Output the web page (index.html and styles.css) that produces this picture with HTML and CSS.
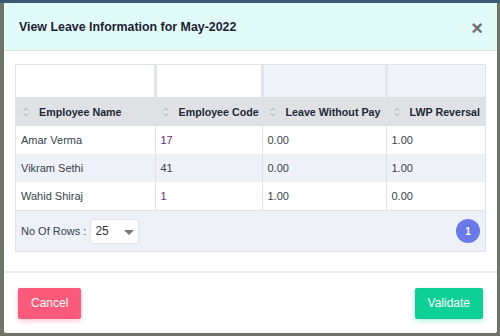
FILE: index.html
```html
<!DOCTYPE html>
<html>
<head>
<meta charset="utf-8">
<link rel="stylesheet" href="styles.css">
</head>
<body>
<div class="backdrop">
  <div class="modal">
    <div class="modal-header">
      <h1 class="modal-title">View Leave Information for May-2022</h1>
      <span class="close">&times;</span>
    </div>
    <div class="modal-body">
      <div class="grid">
        <table class="tbl">
          <colgroup>
            <col class="c1"><col class="c2"><col class="c3"><col class="c4">
          </colgroup>
          <tr class="filter">
            <td></td><td></td><td class="dis"></td><td class="dis"></td>
          </tr>
          <tr class="head">
            <th><svg class="sort" viewBox="0 0 6 10" width="6" height="10"><path d="M0.8 3.6 L3 1.2 L5.2 3.6 M0.8 6.4 L3 8.8 L5.2 6.4" fill="none" stroke="#a2a7ae" stroke-width="1"/></svg>Employee Name</th>
            <th><svg class="sort" viewBox="0 0 6 10" width="6" height="10"><path d="M0.8 3.6 L3 1.2 L5.2 3.6 M0.8 6.4 L3 8.8 L5.2 6.4" fill="none" stroke="#a2a7ae" stroke-width="1"/></svg>Employee Code</th>
            <th><svg class="sort" viewBox="0 0 6 10" width="6" height="10"><path d="M0.8 3.6 L3 1.2 L5.2 3.6 M0.8 6.4 L3 8.8 L5.2 6.4" fill="none" stroke="#a2a7ae" stroke-width="1"/></svg>Leave Without Pay</th>
            <th><svg class="sort" viewBox="0 0 6 10" width="6" height="10"><path d="M0.8 3.6 L3 1.2 L5.2 3.6 M0.8 6.4 L3 8.8 L5.2 6.4" fill="none" stroke="#a2a7ae" stroke-width="1"/></svg>LWP Reversal</th>
          </tr>
          <tr><td>Amar Verma</td><td class="code">17</td><td>0.00</td><td>1.00</td></tr>
          <tr class="alt"><td>Vikram Sethi</td><td>41</td><td>0.00</td><td>1.00</td></tr>
          <tr><td>Wahid Shiraj</td><td class="code">1</td><td>1.00</td><td>0.00</td></tr>
        </table>
        <div class="pager">
          <div class="rows">
            <span class="rows-label">No Of Rows :</span>
            <div class="select"><span>25</span><span class="caret"></span></div>
          </div>
          <span class="page">1</span>
        </div>
      </div>
    </div>
    <div class="modal-footer">
      <button class="btn cancel">Cancel</button>
      <button class="btn validate">Validate</button>
    </div>
  </div>
</div>
</body>
</html>
```
FILE: styles.css
```css
html, body { margin: 0; padding: 0; }
body {
  width: 500px; height: 336px; overflow: hidden;
  font-family: "Liberation Sans", Arial, sans-serif;
  background: #6d7268;
}
.backdrop {
  height: 336px;
  box-sizing: border-box;
  padding: 3px 3px 3px 4px;
  background: linear-gradient(#3c5a74 0 3px, #6f7468 3px);
}
.modal {
  background: #fff;
  height: 330px;
  display: flex; flex-direction: column;
  border-radius: 2px;
}
.modal-header {
  background: #e1fcf8;
  height: 47px;
  border-bottom: 1px solid #dde3e3;
  display: flex; align-items: center; justify-content: space-between;
  padding: 0 14px 0 15px;
  flex: none;
}
.modal-title {
  margin: 0; font-size: 12.4px; font-weight: bold; color: #1d2233;
  padding-top: 1px;
}
.close {
  font-size: 20px; font-weight: bold; color: #6d6f70; line-height: 1;
  padding-top: 2px;
}
.modal-body {
  padding: 13px 11px 0 11px; height: 222px; box-sizing: border-box;
  border-bottom: 2px solid #ececec; flex: none;
}
.grid {
  border: 1px solid #dfe2e6;
}
.tbl {
  width: 100%; border-collapse: collapse; font-size: 11px; color: #3a3f4a;
  table-layout: fixed;
}
.c1 { width: 139px; } .c2 { width: 107px; } .c3 { width: 124px; }
.tbl td, .tbl th {
  border-right: 1px solid #e0e2e6;
  padding: 0 5px;
  text-align: left;
  white-space: nowrap; overflow: hidden;
}
.tbl td:last-child, .tbl th:last-child { border-right: none; }
.filter td { height: 32px; background: #fff; border-right: 3px solid #e3e5ea; }
.filter td.dis { background: #f1f4f8; }
.head th { height: 29px; background: #dfe1e5; font-weight: bold; color: #222834; font-size: 10.7px; }
.sort { display: inline-block; vertical-align: -1px; margin: 0 10px 0 2px; }
.tbl tr:not(.filter):not(.head) td { height: 28px; }
.tbl tr.alt td { background: #eef1f8; }
.code { color: #6b2a7e; }
.pager {
  border-top: 1px solid #e0e2e6;
  background: #eef1f8;
  height: 40px;
  display: flex; align-items: center; justify-content: space-between;
  padding: 0 5px 0 5px;
}
.rows { display: flex; align-items: center; gap: 4px; }
.rows-label { font-size: 11px; color: #3a3f4a; }
.select {
  width: 49px; height: 25px; box-sizing: border-box;
  background: #fff; border: 1px solid #e1e4e8; border-radius: 3px;
  display: flex; align-items: center; justify-content: space-between;
  padding: 0 4px 0 4px; font-size: 12px; color: #333;
}
.caret {
  width: 0; height: 0; margin-top: 3px;
  border-left: 5px solid transparent; border-right: 5px solid transparent;
  border-top: 5px solid #777;
}
.page {
  width: 24px; height: 24px; border-radius: 50%;
  background: #6a79ea; color: #fff; font-size: 10px; font-weight: bold;
  display: flex; align-items: center; justify-content: center;
}
.modal-footer {
  flex: 1;
  display: flex; align-items: center; justify-content: space-between;
  padding: 0 14px 0 14px;
}
.btn {
  border: none; border-radius: 2px; height: 31px; font-size: 12px; color: #fff;
  font-family: "Liberation Sans", Arial, sans-serif;
  padding: 0 13px;
}
.cancel { background: #fb5a7b; box-shadow: 0 2px 5px rgba(251,90,123,0.35); }
.validate { background: #0fd094; box-shadow: 0 2px 5px rgba(15,208,148,0.35); }
```
